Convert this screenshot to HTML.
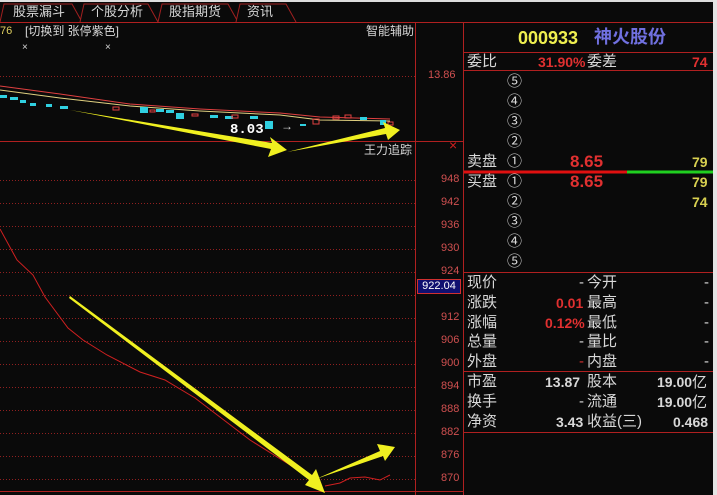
<!DOCTYPE html>
<html><head><meta charset="utf-8"><style>
body{margin:0;width:717px;height:495px;background:#0a0a0a;overflow:hidden;position:relative;font-family:"Liberation Sans","Noto Sans CJK SC",sans-serif;}
.a{position:absolute;white-space:nowrap;line-height:1;}
.w{color:#d8d8d8;font-size:15px;}
.r{color:#e03030;font-weight:bold;font-size:14px;}
.y{color:#d8d050;font-weight:bold;font-size:14px;}
.ax{color:#d05050;font-size:11px;font-family:"Liberation Sans",sans-serif;}
</style></head><body>
<div style="position:absolute;left:0;top:0;width:717px;height:2px;background:#ddd"></div>
<div style="position:absolute;left:713px;top:0;width:4px;height:495px;background:#e4e4e4"></div>
<svg width="717" height="495" style="position:absolute;left:0;top:0">
<g fill="#0a0a0a" stroke="#a02020" stroke-width="1">
<path d="M0,22 L4,4 L72,4 L82,22"/>
<path d="M80,22 L84,4 L148,4 L158,22"/>
<path d="M158,22 L162,4 L228,4 L238,22"/>
<path d="M236,22 L240,4 L286,4 L296,22"/>
</g>
<g stroke="#b02020" stroke-width="1" fill="none">
<line x1="0" y1="22.5" x2="713" y2="22.5"/>
<line x1="0" y1="141.5" x2="463" y2="141.5"/>
<line x1="415.5" y1="22" x2="415.5" y2="495"/>
<line x1="463.5" y1="22" x2="463.5" y2="495"/>
<line x1="0" y1="491.5" x2="463" y2="491.5"/>
<line x1="463" y1="52.5" x2="713" y2="52.5"/>
<line x1="463" y1="70.5" x2="713" y2="70.5"/>
<line x1="463" y1="272.5" x2="713" y2="272.5"/>
<line x1="463" y1="371.5" x2="713" y2="371.5"/>
<line x1="463" y1="432.5" x2="713" y2="432.5"/>
</g>
<line x1="464" y1="172" x2="627" y2="172" stroke="#e01010" stroke-width="3"/>
<line x1="627" y1="172" x2="713" y2="172" stroke="#20d020" stroke-width="3"/>
<g stroke="#902020" stroke-width="1" stroke-dasharray="1,2">
<line x1="0" y1="76.5" x2="415" y2="76.5"/>
<line x1="0" y1="180.5" x2="415" y2="180.5"/><line x1="0" y1="203.5" x2="415" y2="203.5"/>
<line x1="0" y1="226.5" x2="415" y2="226.5"/><line x1="0" y1="249.5" x2="415" y2="249.5"/>
<line x1="0" y1="272.5" x2="415" y2="272.5"/><line x1="0" y1="295.5" x2="415" y2="295.5"/>
<line x1="0" y1="318.5" x2="415" y2="318.5"/><line x1="0" y1="341.5" x2="415" y2="341.5"/>
<line x1="0" y1="364.5" x2="415" y2="364.5"/><line x1="0" y1="387.5" x2="415" y2="387.5"/>
<line x1="0" y1="410.5" x2="415" y2="410.5"/><line x1="0" y1="433.5" x2="415" y2="433.5"/>
<line x1="0" y1="456.5" x2="415" y2="456.5"/><line x1="0" y1="479.5" x2="415" y2="479.5"/>
</g>
<polyline fill="none" stroke="#e04040" stroke-width="1" points="0,86 60,94 130,104 200,109 280,113 320,117 390,119"/>
<polyline fill="none" stroke="#e0d080" stroke-width="1" points="0,90 60,98 130,106 200,111 280,115 320,120 390,121"/>
<g fill="#30d0e0">
<rect x="0" y="95" width="7" height="3"/><rect x="10" y="97" width="8" height="3"/><rect x="20" y="100" width="6" height="3"/><rect x="30" y="103" width="6" height="3"/><rect x="46" y="104" width="6" height="3"/><rect x="60" y="106" width="8" height="3"/>
<rect x="140" y="107" width="8" height="6"/><rect x="156" y="109" width="8" height="3"/><rect x="166" y="110" width="8" height="3"/><rect x="176" y="113" width="8" height="6"/><rect x="210" y="115" width="8" height="3"/><rect x="265" y="121" width="8" height="8"/><rect x="360" y="117" width="7" height="3"/><rect x="380" y="120" width="6" height="5"/><rect x="250" y="116" width="8" height="3"/><rect x="225" y="116" width="8" height="3"/><rect x="300" y="124" width="6" height="2"/>
</g>
<g fill="none" stroke="#e04040"><rect x="113" y="107" width="6" height="3"/><rect x="150" y="110" width="5" height="2"/><rect x="192" y="114" width="6" height="2"/><rect x="232" y="115" width="6" height="3"/><rect x="313" y="119" width="6" height="5"/><rect x="333" y="116" width="6" height="3"/><rect x="345" y="115" width="6" height="3"/><rect x="388" y="122" width="5" height="3"/></g>
<polyline fill="none" stroke="#d02020" stroke-width="1" points="0,229 17,260 33,275 45,297 68,328 83,340 107,355 140,372 165,380 195,398 250,440 290,465 320,485"/>
<polyline fill="none" stroke="#d02020" stroke-width="1" points="325,486 340,483 350,478 365,477 380,480 390,475"/>
<g fill="#f0f020">
<polygon points="70,110 272,143 270,137 287,150 268,157 271,149"/>
<polygon points="287,152 385,128 383,122 400,130 388,140 386,134"/>
<polygon points="69,298 70,296 312,475 316,469 325,493 305,485 309,480"/>
<polygon points="316,479 380,451 377,444 395,447 385,461 383,456"/>
</g>
<text x="449" y="150" fill="#d02020" font-size="14" font-family="Liberation Sans">×</text>
</svg>
<div class="a w" style="left:13px;top:5px;font-size:13px">股票漏斗</div>
<div class="a w" style="left:91px;top:5px;font-size:13px">个股分析</div>
<div class="a w" style="left:169px;top:5px;font-size:13px">股指期货</div>
<div class="a w" style="left:247px;top:5px;font-size:13px">资讯</div>
<div class="a" style="left:0;top:26px;color:#e0d060;font-size:11px">76</div>
<div class="a w" style="left:25px;top:25px;font-size:12px">[切换到 张停紫色]</div>
<div class="a w" style="left:366px;top:25px;font-size:12px">智能辅助</div>
<div class="a w" style="left:22px;top:43px;font-size:10px">×</div>
<div class="a w" style="left:105px;top:43px;font-size:10px">×</div>
<div class="a ax" style="left:428px;top:70px">13.86</div>
<div class="a" style="left:230px;top:123px;color:#fff;font-weight:bold;font-size:14px;font-family:'Liberation Mono',monospace">8.03</div>
<div class="a w" style="left:281px;top:120px;font-size:12px">→</div>
<div class="a w" style="left:364px;top:144px;font-size:12px">王力追踪</div>
<div class="a ax" style="left:441px;top:174px">948</div><div class="a ax" style="left:441px;top:197px">942</div>
<div class="a ax" style="left:441px;top:220px">936</div><div class="a ax" style="left:441px;top:243px">930</div>
<div class="a ax" style="left:441px;top:266px">924</div><div class="a ax" style="left:441px;top:312px">912</div>
<div class="a ax" style="left:441px;top:335px">906</div><div class="a ax" style="left:441px;top:358px">900</div>
<div class="a ax" style="left:441px;top:381px">894</div><div class="a ax" style="left:441px;top:404px">888</div>
<div class="a ax" style="left:441px;top:427px">882</div><div class="a ax" style="left:441px;top:450px">876</div>
<div class="a ax" style="left:441px;top:473px">870</div>
<div class="a" style="left:417px;top:279px;width:44px;height:15px;background:#101070;border:1px solid #d03030;box-sizing:border-box;color:#fff;font-size:11px;text-align:center;line-height:13px">922.04</div>
<div class="a" style="left:518px;top:29px;color:#f0f050;font-weight:bold;font-size:18px">000933</div>
<div class="a" style="left:594px;top:28px;color:#7070e0;font-weight:bold;font-size:18px">神火股份</div>
<div class="a w" style="left:467px;top:54px">委比</div>
<div class="a r" style="left:538px;top:55px">31.90%</div>
<div class="a w" style="left:587px;top:54px">委差</div>
<div class="a r" style="left:692px;top:55px">74</div>
<div class="a w" style="left:507px;top:74px">⑤</div><div class="a w" style="left:507px;top:94px">④</div>
<div class="a w" style="left:507px;top:114px">③</div><div class="a w" style="left:507px;top:134px">②</div>
<div class="a w" style="left:467px;top:154px">卖盘</div><div class="a w" style="left:507px;top:154px">①</div>
<div class="a r" style="left:570px;top:153px;font-size:17px">8.65</div>
<div class="a y" style="left:692px;top:155px">79</div>
<div class="a w" style="left:467px;top:174px">买盘</div><div class="a w" style="left:507px;top:174px">①</div>
<div class="a r" style="left:570px;top:173px;font-size:17px">8.65</div>
<div class="a y" style="left:692px;top:175px">79</div>
<div class="a w" style="left:507px;top:194px">②</div><div class="a y" style="left:692px;top:195px">74</div>
<div class="a w" style="left:507px;top:214px">③</div><div class="a w" style="left:507px;top:234px">④</div>
<div class="a w" style="left:507px;top:254px">⑤</div>
<div class="a w" style="left:467px;top:275px">现价</div><div class="a w" style="left:579px;top:275px">-</div><div class="a w" style="left:587px;top:275px">今开</div><div class="a w" style="left:704px;top:275px">-</div>
<div class="a w" style="left:467px;top:295px">涨跌</div><div class="a r" style="left:556px;top:296px">0.01</div><div class="a w" style="left:587px;top:295px">最高</div><div class="a w" style="left:704px;top:295px">-</div>
<div class="a w" style="left:467px;top:315px">涨幅</div><div class="a r" style="left:545px;top:316px">0.12%</div><div class="a w" style="left:587px;top:315px">最低</div><div class="a w" style="left:704px;top:315px">-</div>
<div class="a w" style="left:467px;top:334px">总量</div><div class="a w" style="left:579px;top:334px">-</div><div class="a w" style="left:587px;top:334px">量比</div><div class="a w" style="left:704px;top:334px">-</div>
<div class="a w" style="left:467px;top:354px">外盘</div><div class="a" style="left:579px;top:354px;color:#d03030;font-size:15px">-</div><div class="a w" style="left:587px;top:354px">内盘</div><div class="a w" style="left:704px;top:354px">-</div>
<div class="a w" style="left:467px;top:374px">市盈</div><div class="a w" style="left:545px;top:375px;font-weight:bold;font-size:14px">13.87</div><div class="a w" style="left:587px;top:374px">股本</div><div class="a w" style="left:657px;top:375px;font-weight:bold;font-size:14px">19.00<span style="font-weight:normal;font-size:15px">亿</span></div>
<div class="a w" style="left:467px;top:394px">换手</div><div class="a w" style="left:579px;top:394px">-</div><div class="a w" style="left:587px;top:394px">流通</div><div class="a w" style="left:657px;top:395px;font-weight:bold;font-size:14px">19.00<span style="font-weight:normal;font-size:15px">亿</span></div>
<div class="a w" style="left:467px;top:414px">净资</div><div class="a w" style="left:556px;top:415px;font-weight:bold;font-size:14px">3.43</div><div class="a w" style="left:587px;top:414px">收益(三)</div><div class="a w" style="left:673px;top:415px;font-weight:bold;font-size:14px">0.468</div>
</body></html>
